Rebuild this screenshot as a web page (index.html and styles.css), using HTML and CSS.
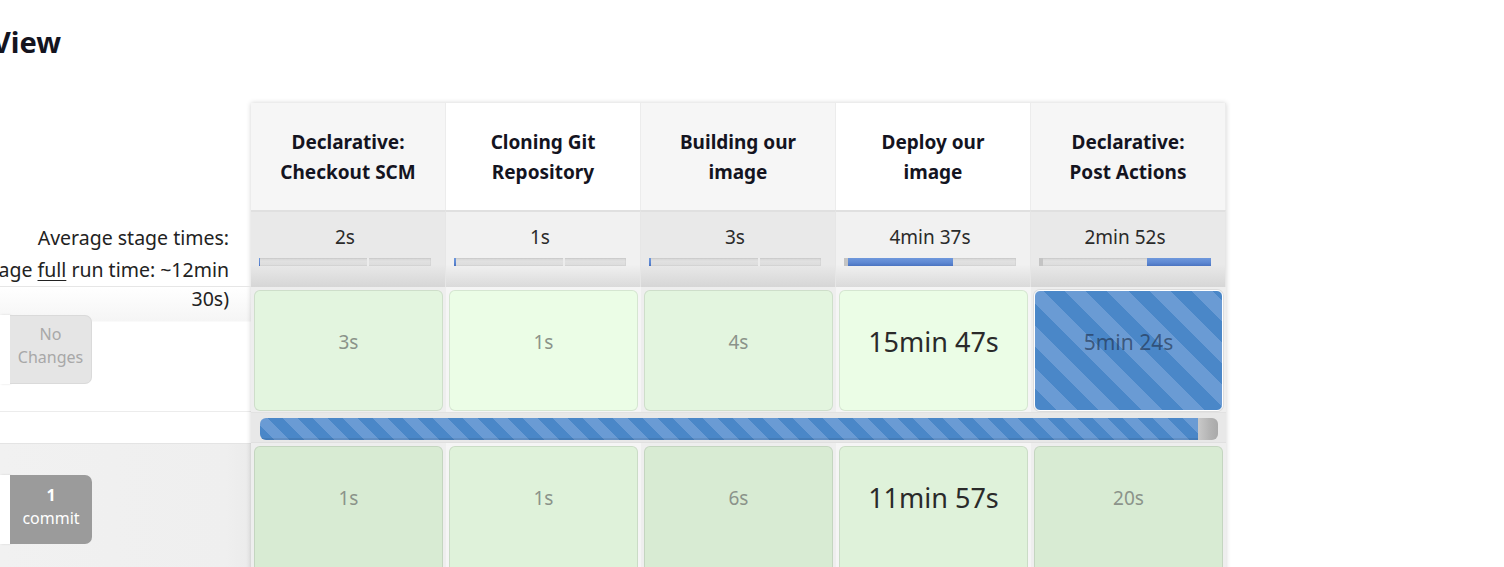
FILE: index.html
```html
<!DOCTYPE html>
<html lang="en">
<head>
<meta charset="utf-8">
<title>Stage View</title>
<link rel="stylesheet" href="styles.css">
</head>
<body>
<div class="page">
  <div class="title-wrap"><h2 class="title">Stage View</h2></div>
  <div class="stage-view">
    <div class="labels">
      <div class="lbl-head"></div>
      <div class="lbl-avg">
        <div class="avg-line first"><span>Average stage times:</span></div>
        <div class="avg-line"><span>(Average <u>full</u> run time: ~12min</span></div>
        <div class="avg-line last"><span>30s)</span></div>
      </div>
      <div class="lbl-row r1">
        <div class="build-card"></div>
        <div class="changes none"><span>No</span><span>Changes</span></div>
      </div>
      <div class="lbl-bar"></div>
      <div class="lbl-row r2">
        <div class="build-card"></div>
        <div class="changes some"><b>1</b><span>commit</span></div>
      </div>
    </div>

    <div class="stages">
      <div class="sh odd">Declarative: Checkout SCM</div>
      <div class="sh even">Cloning Git Repository</div>
      <div class="sh odd">Building our image</div>
      <div class="sh even">Deploy our image</div>
      <div class="sh odd">Declarative: Post Actions</div>

      <div class="avg odd"><div class="avg-time">2s</div><div class="track"><span class="gap" style="width:0%"></span><span class="fill" style="width:1px"></span><span class="gap" style="width:62%"></span><span class="tick"></span></div></div>
      <div class="avg even"><div class="avg-time">1s</div><div class="track"><span class="gap" style="width:0%"></span><span class="fill" style="width:2px"></span><span class="gap" style="width:62%"></span><span class="tick"></span></div></div>
      <div class="avg odd"><div class="avg-time">3s</div><div class="track"><span class="gap" style="width:0%"></span><span class="fill" style="width:2px"></span><span class="gap" style="width:62%"></span><span class="tick"></span></div></div>
      <div class="avg even"><div class="avg-time">4min 37s</div><div class="track"><span class="gap dark" style="width:2.5%"></span><span class="fill" style="width:61%"></span></div></div>
      <div class="avg odd"><div class="avg-time">2min 52s</div><div class="track"><span class="gap dark" style="width:2.5%"></span><span class="gap" style="width:60.5%"></span><span class="fill" style="width:37%"></span></div></div>

      <div class="col odd"><div class="cell ok1 small">3s</div></div>
      <div class="col even"><div class="cell ok2 small">1s</div></div>
      <div class="col odd"><div class="cell ok1 small">4s</div></div>
      <div class="col even"><div class="cell ok2 big">15min 47s</div></div>
      <div class="col odd"><div class="cell running">5min 24s</div></div>

      <div class="run-bar"><div class="bar"><div class="bar-done"></div><div class="bar-rest"></div></div></div>

      <div class="col odd"><div class="cell ok3 small">1s</div></div>
      <div class="col even"><div class="cell ok4 small">1s</div></div>
      <div class="col odd"><div class="cell ok3 small">6s</div></div>
      <div class="col even"><div class="cell ok4 big">11min 57s</div></div>
      <div class="col odd"><div class="cell ok3 small">20s</div></div>
    </div>
  </div>
</div>
</body>
</html>
```
FILE: styles.css
```css
* { box-sizing: border-box; }
html, body { margin: 0; padding: 0; background: #fff; overflow: hidden; }
body {
  width: 1504px;
  height: 567px;
  font-family: "Noto Sans", "Open Sans", sans-serif;
  color: #333;
}

.title-wrap {
  display: flex;
  justify-content: flex-end;
  width: 61px;
  height: 103px;
  padding-top: 22px;
}
.title {
  margin: 0;
  font-size: 29px;
  line-height: 40px;
  font-weight: 700;
  color: #14141f;
  white-space: nowrap;
  flex: none;
}

.stage-view { display: flex; align-items: flex-start; }

/* left labels column */
.labels { width: 251px; flex: none; display: flex; flex-direction: column; }
.lbl-head { height: 107px; }
.lbl-avg {
  position: relative;
  z-index: 1;
  height: 77px;
  border-bottom: 1px solid #e6e6e6;
  padding-top: 15px;
  padding-right: 22px;
  font-size: 19.5px;
  color: #222;
}
.avg-line { display: flex; justify-content: flex-end; white-space: nowrap; line-height: 29px; }
.avg-line.first { line-height: 26px; margin-bottom: 4px; }
.avg-line u { text-decoration-thickness: 1px; text-underline-offset: 3px; }

.lbl-row { display: flex; align-items: center; }
.lbl-row.r1 {
  height: 125px;
  background: linear-gradient(to bottom, #fff 0, #f5f5f5 34px, #fff 35px);
  border-bottom: 1px solid #ececec;
}
.lbl-row.r2 {
  height: 131px;
  background: linear-gradient(to right, #f1f1f1, #efefef 90%, #ebebeb);
  border-top: 1px solid #e4e4e4;
}
.lbl-bar { height: 31px; background: #fff; }

.build-card {
  width: 10px;
  height: 69px;
  background: #fff;
  box-shadow: 1px 0 2px rgba(0,0,0,.12);
}
.changes {
  width: 82px;
  height: 69px;
  border-radius: 0 7px 7px 0;
  display: flex;
  flex-direction: column;
  justify-content: center;
  align-items: center;
  text-align: center;
  font-size: 16px;
  line-height: 23px;
}
.changes.none { background: #e5e5e5; color: #a8a8a8; border: 1px solid #dadada; border-left: 0; padding-bottom: 7px; }
.changes.some { background: #9b9b9b; color: #fff; padding-bottom: 4px; }

/* stage table */
.stages {
  display: grid;
  grid-template-columns: repeat(5, 195px);
  grid-template-rows: 107px 77px 125px 31px 131px;
  box-shadow: 0 0 5px rgba(0,0,0,.18);
  width: 975px;
}
.sh {
  display: flex;
  align-items: center;
  justify-content: center;
  text-align: center;
  padding: 0 24px;
  font-size: 19px;
  line-height: 30px;
  font-weight: 700;
  color: #14141f;
  border-right: 1px solid #ececec;
}
.sh.odd { background: #f6f6f6; }
.sh.even { background: #fff; }

.avg {
  padding: 16px 14px 0 8px;
  border-top: 2px solid #e0e0e0;
  border-right: 1px solid #e6e6e6;
}
.avg.odd { background: linear-gradient(to bottom, #e9e9e9 0, #e9e9e9 70%, #d6d6d6 100%); }
.avg.even { background: linear-gradient(to bottom, #f1f1f1 0, #f1f1f1 70%, #dadada 100%); }
.avg-time {
  text-align: center;
  font-size: 19px;
  line-height: 22px;
  color: #2a2a2a;
  margin-top: -2px;
}
.track {
  margin-top: 10px;
  height: 8px;
  display: flex;
  background: linear-gradient(to bottom, #d3d3d3, #e1e1e1 40%, #dcdcdc);
  box-shadow: inset 0 0 0 1px rgba(0,0,0,.04);
}
.track span { display: block; height: 100%; flex: none; }
.track .gap.dark { background: #c4c4c4; }
.track .fill { background: linear-gradient(to bottom, #6f98dc, #5d87d2 60%, #4a73c0); }
.track .tick { width: 2px; background: #ececec; }

.col { padding: 3px 3px 1px 3px; }
.col.odd { background: #eeeeee; }
.col.even { background: #f5f5f5; }
.cell {
  height: 100%;
  border-radius: 6px;
  border: 1px solid rgba(0,0,0,.09);
  display: flex;
  align-items: flex-start;
  justify-content: center;
  line-height: 102px;
  white-space: nowrap;
}
.cell.small { font-size: 19px; color: #8b938a; }
.cell.big { font-size: 27px; color: #2a2a2a; }
.cell.ok1 { background: #e3f5df; }
.cell.ok2 { background: #ebfde6; }
.cell.ok3 { background: #d8ebd3; }
.cell.ok4 { background: #dff2da; }
.cell.running {
  border: 1px solid #fff;
  box-shadow: 0 0 0 1px #dcdcdc;
  background: repeating-linear-gradient(45deg, #4a87c8 0, #4a87c8 15px, #6a9bd4 15px, #6a9bd4 30px);
  font-size: 21px;
  color: rgba(30, 45, 70, .62);
}

.run-bar {
  grid-column: 1 / -1;
  background: #e8e8e8;
  border-top: 1px solid #e2e2e2;
  border-bottom: 1px solid #e0e0e0;
  padding: 5px 8px 2px 9px;
}
.bar {
  height: 22px;
  display: flex;
  border-radius: 6px;
  overflow: hidden;
}
.bar-done {
  flex: 1;
  background: repeating-linear-gradient(45deg, #4a87c8 0, #4a87c8 10.6px, #6a9bd4 10.6px, #6a9bd4 21.2px);
  box-shadow: inset 0 -2px 0 rgba(0,0,0,.08);
}
.bar-rest {
  width: 20px;
  background: linear-gradient(to right, #c9c9c9, #b3b3b3 60%, #a9a9a9);
}
```
